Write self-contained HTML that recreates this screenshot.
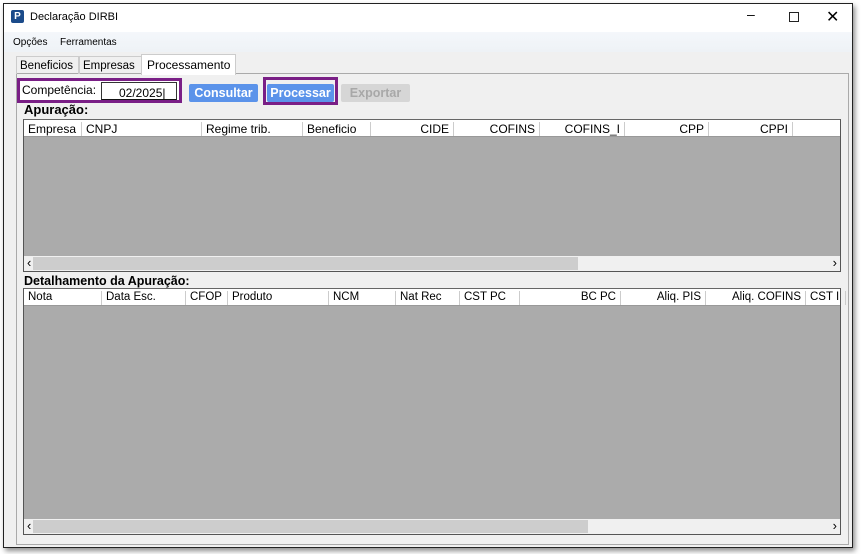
<!DOCTYPE html><html><head><meta charset="utf-8"><style>
*{box-sizing:border-box;margin:0;padding:0}
body{width:864px;height:554px;background:#fff;font-family:"Liberation Sans",sans-serif;position:relative;overflow:hidden}
.a{position:absolute}
.win{left:3px;top:3px;width:850px;height:545px;border:1px solid #222;background:#f0f0f0;box-shadow:2px 3px 5px rgba(0,0,0,.45)}
.hdr{position:absolute;height:17px;background:#fff;border-bottom:1px solid #999;font-size:12px;left:0;right:0;top:0;white-space:nowrap}
.hdr span{position:absolute;top:2px;border-right:1px solid #ccc;height:14px;padding:0 4px}
.grid{background:#ababab;border:1px solid #555;border-top:1px solid #666}
.sb{position:absolute;left:0;right:0;bottom:0;height:15px;background:#f0f0f0}
.btn{position:absolute;top:80px;height:18px;border-radius:2px;color:#fff;font-weight:bold;font-size:12.5px;text-align:center;line-height:18px}
</style></head><body>
<div class="a win">
 <div class="a" style="left:0;top:0;right:0;height:28px;background:#fff"></div>
 <div class="a" style="left:7px;top:6px;width:13px;height:13px;background:#1b4b8a;border-radius:2px;color:#fff;font-size:10px;font-weight:bold;text-align:center;line-height:13px">P</div>
 <div class="a" style="left:26px;top:7px;font-size:11px">Declaração DIRBI</div>
 <div class="a" style="left:743px;top:2px;font-size:14px">–</div>
 <div class="a" style="left:785px;top:8px;width:10px;height:10px;border:1px solid #222"></div>
 <div class="a" style="left:822px;top:3px;font-size:16px">✕</div>
 <div class="a" style="left:0;top:28px;right:0;height:20px;background:linear-gradient(#f4f7fb,#eef2f6)"></div>
 <div class="a" style="left:9px;top:33px;font-size:10px">Opções</div>
 <div class="a" style="left:56px;top:33px;font-size:10px">Ferramentas</div>
 <div class="a" style="left:12px;top:69px;width:833px;height:472px;border:1px solid #aaa;background:#f0f0f0"></div>
 <div class="a" style="left:12px;top:52px;width:63px;height:18px;border:1px solid #ccc;border-bottom:none;font-size:11.5px;padding:3px 0 0 3px;white-space:nowrap">Beneficios</div>
 <div class="a" style="left:75px;top:52px;width:63px;height:18px;border:1px solid #ccc;border-bottom:none;font-size:11.5px;padding:3px 0 0 3px;white-space:nowrap">Empresas</div>
 <div class="a" style="left:137px;top:50px;width:95px;height:21px;border:1px solid #ccc;border-bottom:none;background:#fff;font-size:12px;padding:3px 0 0 5px">Processamento</div>
 <div class="a" style="left:13px;top:74px;width:165px;height:25px;border:3px solid #7a1f86;background:#fff"></div>
 <div class="a" style="left:18px;top:79px;font-size:12px">Competência:</div>
 <div class="a" style="left:97px;top:78px;width:76px;height:18px;border:1px solid #333;border-bottom-color:#111;font-size:12px;padding:3px 0 0 17px;background:#fff">02/2025|</div>
 <div class="btn" style="left:185px;width:69px;background:#5b93ea">Consultar</div>
 <div class="a" style="left:259px;top:73px;width:75px;height:28px;border:3px solid #7a1f86"></div>
 <div class="btn" style="left:263px;width:67px;background:#5b93ea">Processar</div>
 <div class="btn" style="left:337px;width:69px;background:#d6d6d6;color:#a8a8a8">Exportar</div>
 <div class="a" style="left:20px;top:98px;font-size:13px;font-weight:bold">Apuração:</div>
 <div class="a grid" style="left:19px;top:115px;width:818px;height:153px">
  <div class="hdr">
   <span style="left:0;width:58px">Empresa</span><span style="left:58px;width:120px">CNPJ</span><span style="left:178px;width:101px;padding-left:4px">Regime trib.</span><span style="left:279px;width:68px">Beneficio</span><span style="left:347px;width:83px;text-align:right">CIDE</span><span style="left:430px;width:86px;text-align:right">COFINS</span><span style="left:516px;width:85px;text-align:right">COFINS_I</span><span style="left:601px;width:84px;text-align:right">CPP</span><span style="left:685px;width:84px;text-align:right">CPPI</span>
  </div>
  <div class="sb"><div class="a" style="left:9px;top:1px;width:545px;height:13px;background:#cdcdcd"></div><div class="a" style="left:3px;top:-1px;font-size:13px">‹</div><div class="a" style="right:3px;top:-1px;font-size:13px">›</div></div>
 </div>
 <div class="a" style="left:20px;top:270px;font-size:12.5px;font-weight:bold">Detalhamento da Apuração:</div>
 <div class="a grid" style="left:19px;top:284px;width:818px;height:247px">
  <div class="hdr" style="font-size:11.5px">
   <span style="left:0;width:78px">Nota</span><span style="left:78px;width:84px">Data Esc.</span><span style="left:162px;width:42px">CFOP</span><span style="left:204px;width:101px">Produto</span><span style="left:305px;width:67px">NCM</span><span style="left:372px;width:64px">Nat Rec</span><span style="left:436px;width:60px">CST PC</span><span style="left:496px;width:101px;text-align:right">BC PC</span><span style="left:597px;width:85px;text-align:right">Aliq. PIS</span><span style="left:682px;width:100px;text-align:right">Aliq. COFINS</span><span style="left:782px;width:40px">CST I</span>
  </div>
  <div class="sb"><div class="a" style="left:9px;top:1px;width:555px;height:13px;background:#cdcdcd"></div><div class="a" style="left:3px;top:-1px;font-size:13px">‹</div><div class="a" style="right:3px;top:-1px;font-size:13px">›</div></div>
 </div>
</div>
</body></html>
